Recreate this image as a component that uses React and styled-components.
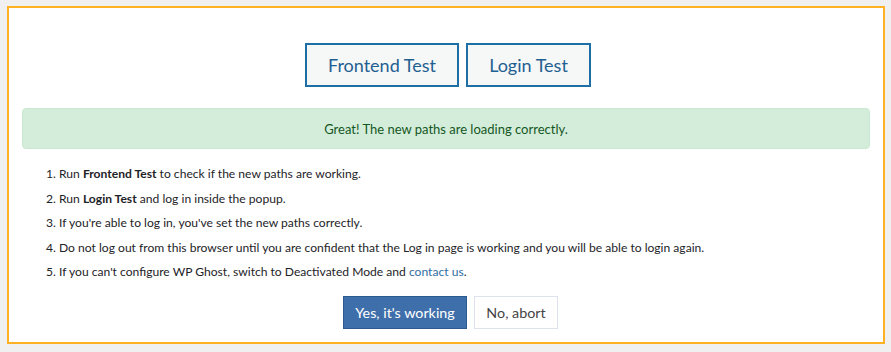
import React from "react";
import styled, { createGlobalStyle } from "styled-components";

const Global = createGlobalStyle`
  html, body { margin: 0; padding: 0; background: #f0f0f0; }
  body { font-family: Lato, "Noto Sans", sans-serif; color: #1e1e1e; }
`;

const Page = styled.div`
  width: 891px;
  height: 352px;
  padding: 6px 6px 0 7px;
  box-sizing: border-box;
`;

const Panel = styled.div`
  width: 878px;
  height: 338px;
  box-sizing: border-box;
  border: 2px solid #ffb124;
  background: #fff;
  padding: 35px 13px 0 13px;
  display: flex;
  flex-direction: column;
`;

const TestRow = styled.div`
  display: flex;
  justify-content: center;
  gap: 7px;
  margin-left: 4px;
`;

const TestButton = styled.button`
  height: 44px;
  width: ${p => p.$w}px;
  border: 2px solid #1d6fa5;
  background: #f6f7f7;
  color: #1f5f91;
  font-family: inherit;
  font-size: 18px;
  padding: 0;
  cursor: pointer;
`;

const Alert = styled.div`
  margin-top: 21px;
  height: 41px;
  box-sizing: border-box;
  background: #d4edda;
  border: 1px solid #c8e8d0;
  border-radius: 4px;
  color: #155724;
  font-size: 13px;
  display: flex;
  align-items: center;
  justify-content: center;
`;

const Steps = styled.ol`
  list-style: none;
  margin: 13px 0 0 0;
  padding: 0 0 0 24px;
  font-size: 12.1px;
  color: #1d2327;
`;

const Step = styled.li`
  line-height: 24.5px;
`;

const Link = styled.a`
  color: #2f6da3;
  text-decoration: none;
`;

const ActionRow = styled.div`
  display: flex;
  justify-content: center;
  gap: 7px;
  margin-top: 11px;
  margin-left: 9px;
`;

const ActionButton = styled.button`
  height: 33px;
  width: ${p => p.$w}px;
  padding: 0;
  font-family: inherit;
  font-size: 14.3px;
  border: 1px solid ${p => (p.$primary ? "#2c5a8f" : "#dde3ec")};
  background: ${p => (p.$primary ? "#3f6fab" : "#fff")};
  color: ${p => (p.$primary ? "#fff" : "#444")};
  cursor: pointer;
`;

export default function App() {
  return (
    <>
      <Global />
      <Page>
        <Panel>
          <TestRow>
            <TestButton $w={154}>Frontend Test</TestButton>
            <TestButton $w={125}>Login Test</TestButton>
          </TestRow>
          <Alert>Great! The new paths are loading correctly.</Alert>
          <Steps>
            <Step>1. Run <b>Frontend Test</b> to check if the new paths are working.</Step>
            <Step>2. Run <b>Login Test</b> and log in inside the popup.</Step>
            <Step>3. If you're able to log in, you've set the new paths correctly.</Step>
            <Step>4. Do not log out from this browser until you are confident that the Log in page is working and you will be able to login again.</Step>
            <Step>5. If you can't configure WP Ghost, switch to Deactivated Mode and <Link href="#">contact us</Link>.</Step>
          </Steps>
          <ActionRow>
            <ActionButton $primary $w={124}>Yes, it's working</ActionButton>
            <ActionButton $w={84}>No, abort</ActionButton>
          </ActionRow>
        </Panel>
      </Page>
    </>
  );
}
